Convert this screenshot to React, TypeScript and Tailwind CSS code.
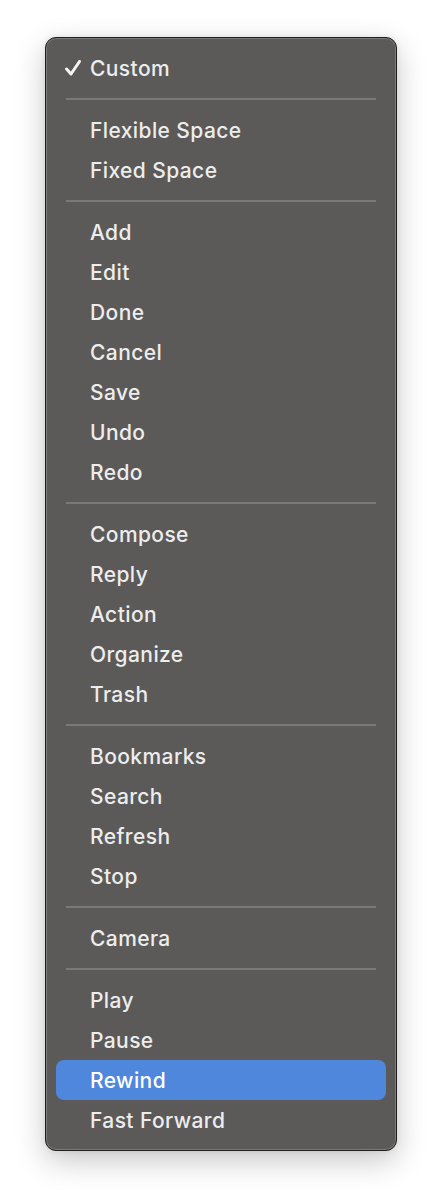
import React from "react";

type Entry = { label: string; checked?: boolean; active?: boolean } | "sep";

const items: Entry[] = [
  { label: "Custom", checked: true },
  "sep",
  { label: "Flexible Space" },
  { label: "Fixed Space" },
  "sep",
  { label: "Add" },
  { label: "Edit" },
  { label: "Done" },
  { label: "Cancel" },
  { label: "Save" },
  { label: "Undo" },
  { label: "Redo" },
  "sep",
  { label: "Compose" },
  { label: "Reply" },
  { label: "Action" },
  { label: "Organize" },
  { label: "Trash" },
  "sep",
  { label: "Bookmarks" },
  { label: "Search" },
  { label: "Refresh" },
  { label: "Stop" },
  "sep",
  { label: "Camera" },
  "sep",
  { label: "Play" },
  { label: "Pause" },
  { label: "Rewind", active: true },
  { label: "Fast Forward" },
];

function Check() {
  return (
    <svg width="16" height="16" viewBox="0 0 16 16" className="absolute left-[9px] top-[12px]">
      <path d="M1.6 9 L6 14 L14.5 1.5" fill="none" stroke="#f4f4f4" strokeWidth="3" strokeLinecap="round" strokeLinejoin="round" />
    </svg>
  );
}

export default function App() {
  return (
    <div className="min-h-[1204px] w-[442px] bg-white pt-[37px] pl-[45px] font-['Inter','Liberation_Sans',sans-serif]">
      <div className="w-[352px] rounded-[11px] border border-[#1e1e1e] bg-[#5b5a58] p-[10px] shadow-[inset_0_0_0_1px_#7c7b79,0_10px_30px_rgba(0,0,0,0.22),0_0_6px_rgba(0,0,0,0.08)]">
        {items.map((it, i) =>
          it === "sep" ? (
            <div key={i} className="flex h-[22px] items-center px-[10px]">
              <div className="h-[2px] w-full bg-[#7a7977]" />
            </div>
          ) : (
            <div
              key={i}
              className={`relative flex h-[40px] items-center rounded-[8px] pl-[34px] pt-[1px] text-[21px] font-[450] tracking-[0.4px] text-[#ededed] ${
                it.active ? "bg-[#4f87dd] text-white" : ""
              }`}
            >
              {it.checked && <Check />}
              {it.label}
            </div>
          )
        )}
      </div>
    </div>
  );
}
